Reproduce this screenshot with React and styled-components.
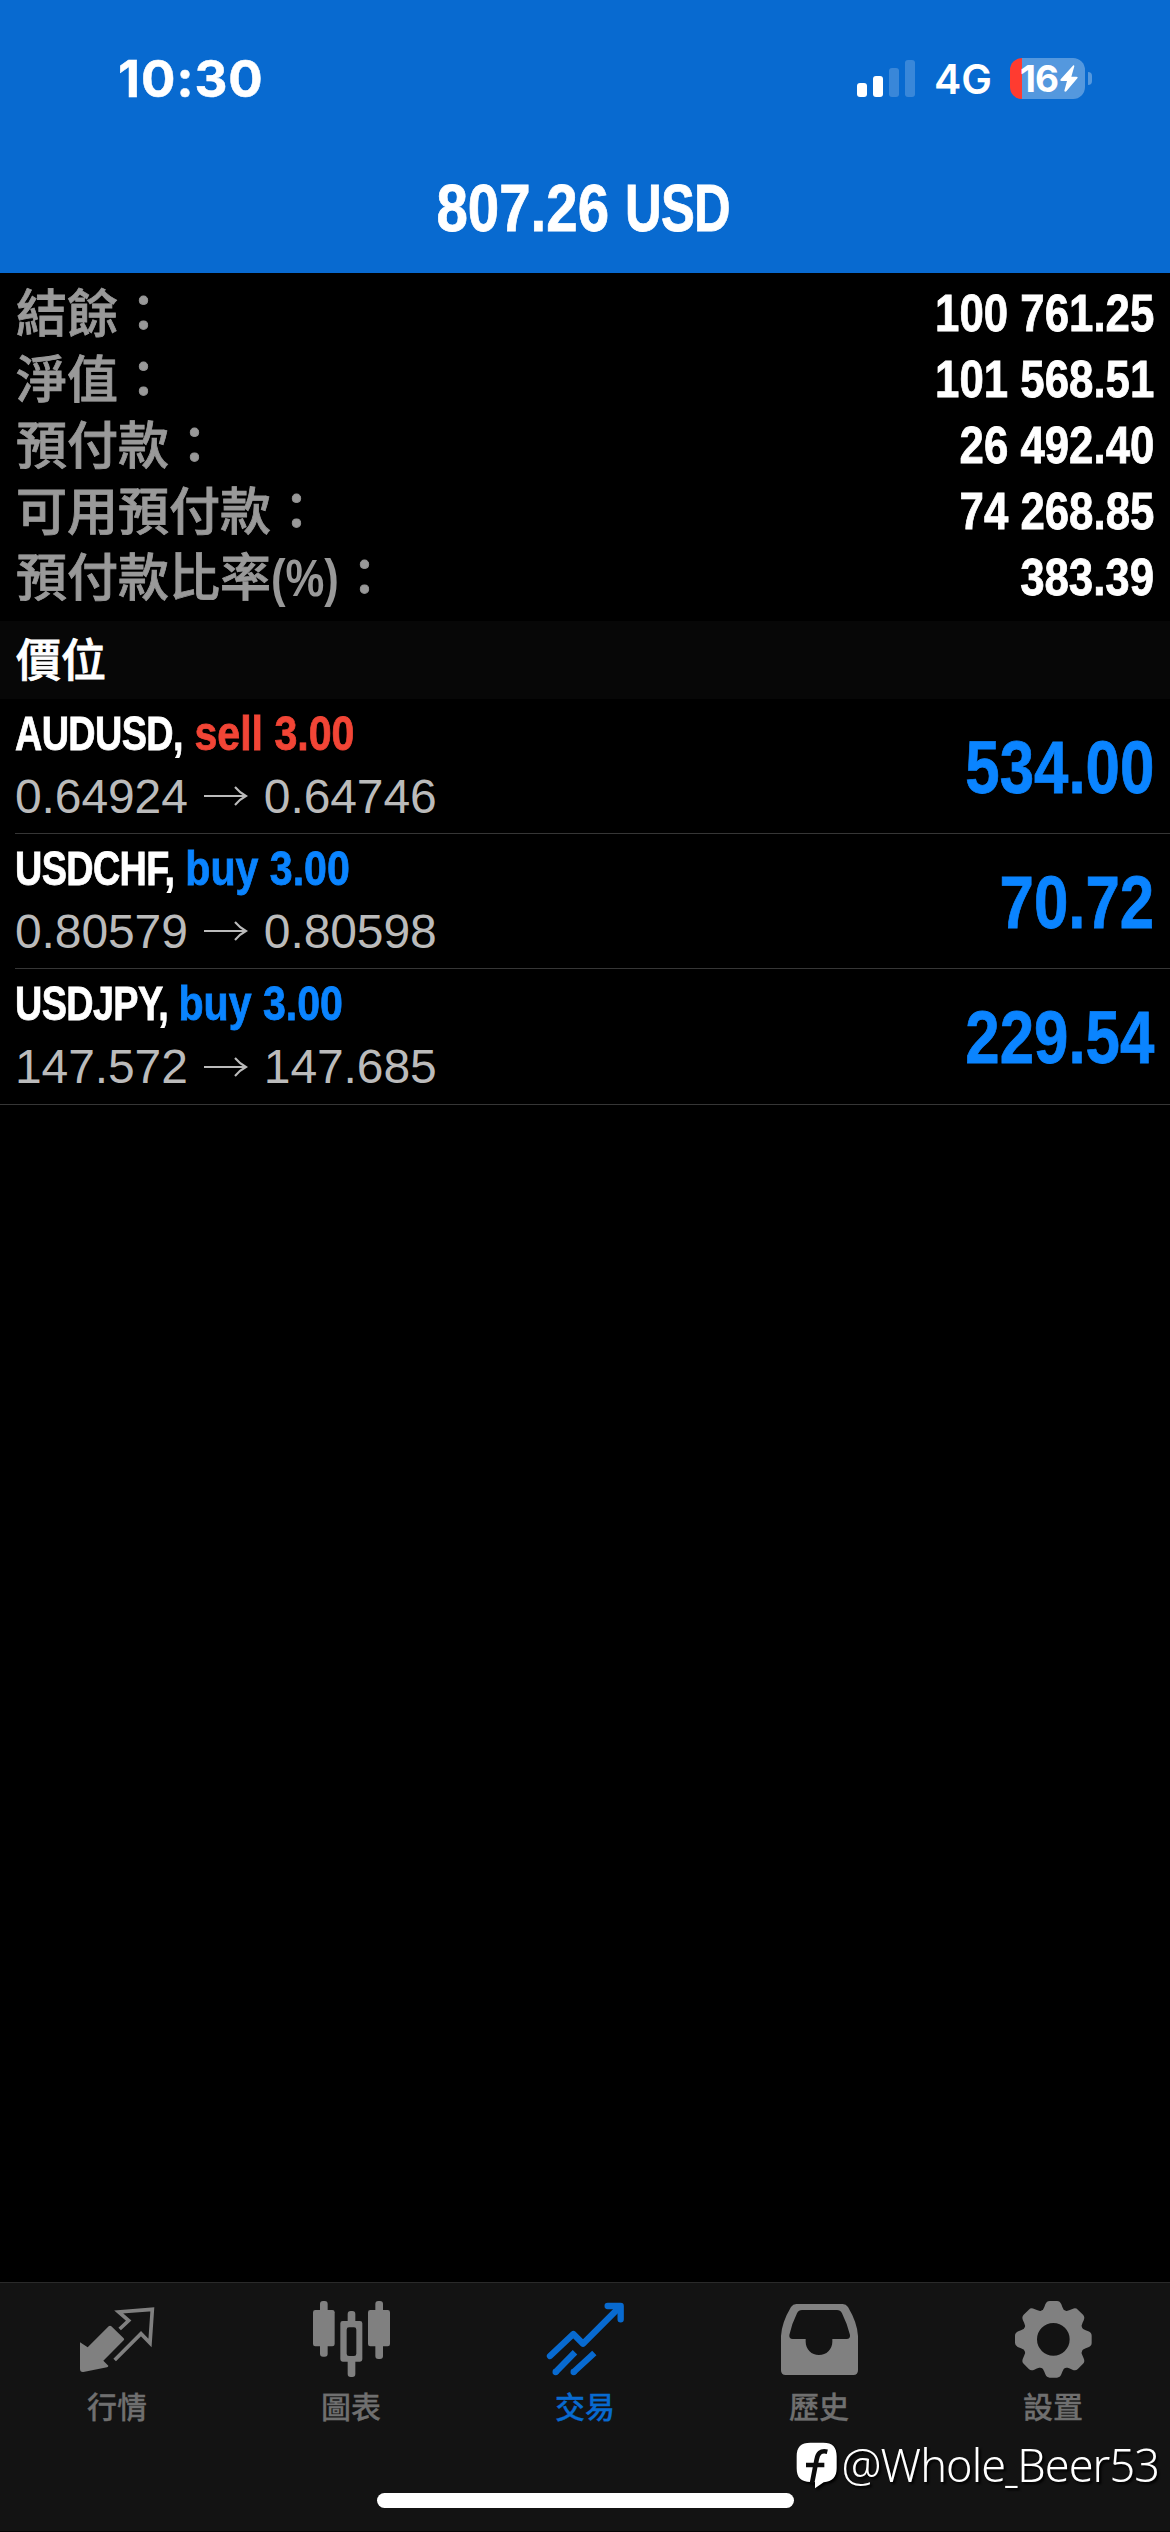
import React from 'react';
import styled, { createGlobalStyle } from 'styled-components';

const GlobalStyle = createGlobalStyle`
  * {
    box-sizing: border-box;
  }

  body {
    margin: 0;
    background: #000;
  }
`;

const account = [
  { label: '結餘：', value: '100 761.25' },
  { label: '淨值：', value: '101 568.51' },
  { label: '預付款：', value: '26 492.40' },
  { label: '可用預付款：', value: '74 268.85' },
  { label: '預付款比率', unit: '(%)', value: '383.39' },
];

const positions = [
  { symbol: 'AUDUSD', side: 'sell', volume: '3.00', open: '0.64924', current: '0.64746', profit: '534.00' },
  { symbol: 'USDCHF', side: 'buy', volume: '3.00', open: '0.80579', current: '0.80598', profit: '70.72' },
  { symbol: 'USDJPY', side: 'buy', volume: '3.00', open: '147.572', current: '147.685', profit: '229.54' },
];

const QuotesIcon = () => (
  <TabIcon viewBox="0 0 240 240">
    <path
      d="M9 127L32 142L95 79Q99 75 103 79L140 115Q143 118 140 121L79 182L94 197Q94 201 90 202L19 216Q9 217 9 207Z"
      fill="currentColor"
    />
    <path
      d="M128 87L155 62L125 36L226 28L219 129L192 101L113 180"
      fill="none"
      stroke="currentColor"
      strokeWidth="11"
    />
  </TabIcon>
);

const ChartIcon = () => (
  <TabIcon viewBox="0 0 240 240" fill="currentColor">
    <rect x="27" y="3" width="23" height="167" rx="9" />
    <rect x="6" y="30" width="65" height="109" rx="7" />
    <rect x="193" y="3" width="23" height="174" rx="9" />
    <rect x="171" y="30" width="66" height="109" rx="7" />
    <rect x="110" y="33" width="23" height="45" rx="9" />
    <rect x="110" y="175" width="23" height="56" rx="9" />
    <path
      fillRule="evenodd"
      d="M95 63H147Q154 63 154 70V178Q154 185 147 185H95Q88 185 88 178V70Q88 63 95 63ZM114 82Q107 82 107 89V161Q107 168 114 168H129Q136 168 136 161V89Q136 82 129 82Z"
    />
  </TabIcon>
);

const TradeIcon = () => (
  <TabIcon viewBox="0 0 240 240" fill="none" stroke="currentColor" strokeWidth="19" strokeLinejoin="round">
    <path strokeLinecap="round" d="M15 168L85 102L114 131L224 21" />
    <path strokeLinecap="round" d="M188 18H227V58" />
    <path d="M32 216L90 157M86 216L148 159" />
    <circle cx="32" cy="216" r="9.5" fill="currentColor" stroke="none" />
    <circle cx="86" cy="216" r="9.5" fill="currentColor" stroke="none" />
  </TabIcon>
);

const HistoryIcon = () => (
  <TabIcon viewBox="0 0 240 240" fill="currentColor">
    <path
      fillRule="evenodd"
      d="M52 12H191Q201 12 207 21Q235 68 237 108V211Q237 225 223 225H20Q6 225 6 211V108Q8 68 36 21Q42 12 52 12ZM69 30Q59 30 54 40Q38 72 31 105Q30 117 41 117H80V125C80 148 98 165 120 165C142 165 160 148 160 125V117H203Q214 117 213 105Q205 72 189 40Q184 30 174 30Z"
    />
  </TabIcon>
);

const SettingsIcon = () => (
  <TabIcon viewBox="0 0 240 240" fill="currentColor">
    <g transform="translate(121 118)">
      <circle r="71" fill="none" stroke="currentColor" strokeWidth="44" />
      {[0, 45, 90, 135, 180, 225, 270, 315].map((angle) => (
        <path
          key={angle}
          transform={`rotate(${angle})`}
          d="M-37 -83Q-31 -86 -27 -97L-24 -105Q-20 -115 -11 -115H11Q20 -115 24 -105L27 -97Q31 -86 37 -83L20 -70H-20Z"
        />
      ))}
    </g>
  </TabIcon>
);

const tabs = [
  { label: '行情', icon: QuotesIcon },
  { label: '圖表', icon: ChartIcon },
  { label: '交易', icon: TradeIcon, active: true },
  { label: '歷史', icon: HistoryIcon },
  { label: '設置', icon: SettingsIcon },
];

const StatusBar = () => (
  <StatusRow>
    <Clock>10:30</Clock>
    <Signal>
      <Bar $height={14} $on />
      <Bar $height={21} $on />
      <Bar $height={29} />
      <Bar $height={37} />
    </Signal>
    <Network>4G</Network>
    <Battery>
      <span>16</span>
      <svg width="18" height="27" viewBox="0 0 54 81">
        <path
          d="M40 1L2 43Q-1 48 5 48H21L13 77Q14 82 19 79L52 40Q55 35 49 35H34L43 4Q43 0 40 1Z"
          fill="#fff"
        />
      </svg>
    </Battery>
    <BatteryCap />
  </StatusRow>
);

const App = () => {
  return (
    <Screen>
      <GlobalStyle />
      <Header>
        <StatusBar />
        <Title>
          <Condensed $origin="center" $scale={0.842}>
            807.26 <Currency>USD</Currency>
          </Condensed>
        </Title>
      </Header>

      <Account>
        {account.map(({ label, unit, value }) => (
          <AccountRow key={label}>
            <AccountLabel>
              {label}
              {unit && (
                <>
                  <Unit>{unit}</Unit>：
                </>
              )}
            </AccountLabel>
            <Condensed $origin="right" $scale={0.842}>
              {value}
            </Condensed>
          </AccountRow>
        ))}
      </Account>

      <SectionTitle>價位</SectionTitle>

      <Positions>
        {positions.map((p) => (
          <Position key={p.symbol}>
            <Details>
              <Deal>
                <Ticker>{p.symbol}, </Ticker>
                <Side $side={p.side}>
                  {p.side} {p.volume}
                </Side>
              </Deal>
              <Prices>
                {p.open}
                <Arrow viewBox="0 0 44 22">
                  <path d="M0 11H41M31 2Q36 8 42 11Q36 14 31 20" fill="none" stroke="currentColor" strokeWidth="2" />
                </Arrow>
                {p.current}
              </Prices>
            </Details>
            <Profit $origin="right" $scale={0.835}>
              {p.profit}
            </Profit>
          </Position>
        ))}
      </Positions>

      <TabBar>
        {tabs.map(({ label, icon: Icon, active }) => (
          <Tab key={label} $active={active}>
            <Icon />
            <TabLabel $active={active}>{label}</TabLabel>
          </Tab>
        ))}
      </TabBar>
      <HomeIndicator />

      <Watermark>
        <Logo viewBox="0 0 126 144">
          <path
            d="M46 5H85C112 5 125 18 125 46V82C125 108 112 122 86 124L60 142V123H46C18 123 5 110 5 82V46C5 18 18 5 46 5Z"
            fill="#fff"
          />
          <path d="M97 32C76 27 68 38 65 55L51 127M33 72H88" fill="none" stroke="#0c0c0c" strokeWidth="14" />
        </Logo>
        <Handle>
          @Whole<Underscore>_</Underscore>Beer53
        </Handle>
      </Watermark>
    </Screen>
  );
};

const Screen = styled.div`
  position: relative;
  display: flex;
  flex-direction: column;
  width: 1170px;
  height: 2532px;
  background: #000;
  color: #fff;
  font-family: 'Liberation Sans', 'Noto Sans CJK TC', sans-serif;
  overflow: hidden;
`;

const Header = styled.header`
  height: 273px;
  background: #086ad0;
`;

const StatusRow = styled.div`
  display: flex;
  align-items: center;
  height: 156px;
  padding: 0 78px 0 118px;
  font-family: Inter, sans-serif;
`;

const Clock = styled.div`
  margin-right: auto;
  font-size: 51px;
  font-weight: 700;
  letter-spacing: 1px;
  -webkit-text-stroke: 0.5px;
`;

const Signal = styled.div`
  display: flex;
  align-items: flex-end;
  gap: 6px;
  height: 37px;
`;

const Bar = styled.i`
  width: 10px;
  height: ${({ $height }) => $height}px;
  border-radius: 3px;
  background: ${({ $on }) => ($on ? '#fff' : 'rgba(255, 255, 255, 0.2)')};
`;

const Network = styled.div`
  width: 57px;
  margin: 2px 19px 0;
  font-size: 41px;
  font-weight: 600;
`;

const Battery = styled.div`
  display: flex;
  align-items: center;
  justify-content: flex-end;
  gap: 2px;
  width: 75px;
  height: 41px;
  padding-right: 7px;
  border-radius: 12px;
  background: linear-gradient(90deg, #ff3b30 12px, #5498de 12px);
  font-size: 37px;
  font-weight: 700;
  letter-spacing: -1px;
`;

const BatteryCap = styled.i`
  width: 4px;
  height: 13px;
  margin-left: 3px;
  border-radius: 0 6px 6px 0;
  background: #5498de;
`;

const Title = styled.h1`
  display: flex;
  justify-content: center;
  margin: 0;
  padding-right: 4px;
  font-size: 67px;
  line-height: 104px;
`;

const Condensed = styled.span`
  display: inline-block;
  font-weight: 700;
  white-space: pre;
  transform: scaleX(${({ $scale }) => $scale || 0.856});
  transform-origin: ${({ $origin }) => $origin || 'left'};
  -webkit-text-stroke: 0.8px;
`;

const Currency = styled.span`
  display: inline-block;
  margin-right: -14px;
  letter-spacing: -1px;
  transform: scaleX(0.9);
  transform-origin: left;
`;

const Account = styled.section`
  height: 348px;
  padding: 8px 16px 0;
`;

const AccountRow = styled.div`
  display: flex;
  justify-content: space-between;
  height: 66px;
  font-size: 52px;
  line-height: 65px;
`;

const AccountLabel = styled.div`
  color: #999;
  font-size: 51px;
  font-weight: 500;
  line-height: 67px;
  -webkit-text-stroke: 0.8px;
`;

const Unit = styled(Condensed)`
  width: 68px;
  -webkit-text-stroke: 0;
`;

const SectionTitle = styled.h2`
  height: 78px;
  margin: 0;
  padding: 2px 0 0 16px;
  background: #070707;
  font-size: 45px;
  font-weight: 500;
  line-height: 78px;
  -webkit-text-stroke: 0.8px;
`;

const Positions = styled.section`
  flex: 1;
`;

const Position = styled.article`
  display: flex;
  align-items: center;
  justify-content: space-between;
  height: 135px;
  margin-left: 15px;
  padding-right: 16px;
  border-bottom: 1px solid #363636;

  &:last-child {
    height: 136px;
    margin-left: 0;
    padding-left: 15px;
  }
`;

const Details = styled.div`
  padding-bottom: 2px;
`;

const Deal = styled(Condensed)`
  display: block;
  font-size: 48px;
  line-height: 62px;
`;

const Ticker = styled.span`
  display: inline-block;
  margin-right: -16px;
  letter-spacing: -0.8px;
  transform: scaleX(0.92);
  transform-origin: left;
`;

const Side = styled.span`
  color: ${({ $side }) => ($side === 'sell' ? '#f24536' : '#0a84ff')};
`;

const Prices = styled.div`
  display: flex;
  align-items: center;
  color: #bbb;
  font-size: 48px;
  letter-spacing: -0.1px;
  line-height: 63px;
`;

const Arrow = styled.svg`
  width: 44px;
  height: 22px;
  margin: 0 16px;
`;

const Profit = styled(Condensed)`
  padding-top: 2px;
  color: #0a84ff;
  font-size: 74px;
`;

const TabBar = styled.nav`
  display: grid;
  grid-template-columns: repeat(5, 1fr);
  height: 211px;
  padding-top: 17px;
  border-top: 1px solid #2a2a2a;
  background: #131313;
`;

const Tab = styled.div`
  display: flex;
  flex-direction: column;
  align-items: center;
  color: ${({ $active }) => ($active ? '#086ad0' : '#808080')};
`;

const TabIcon = styled.svg`
  width: 80px;
  height: 80px;
`;

const TabLabel = styled.span`
  margin-top: 8px;
  color: ${({ $active }) => ($active ? '#086ad0' : '#6f6f6f')};
  font-size: 30px;
  font-weight: 500;
  line-height: 40px;
  -webkit-text-stroke: 0.3px;
`;

const HomeIndicator = styled.div`
  height: 39px;
  border-bottom: 1px solid #050505;
  background: #131313;

  &::before {
    content: '';
    display: block;
    width: 417px;
    height: 15px;
    margin: 0 auto;
    border-radius: 8px;
    background: #fff;
  }
`;

const Watermark = styled.div`
  position: absolute;
  right: 11px;
  bottom: 37px;
  display: flex;
  align-items: center;
  filter: drop-shadow(2px 2px 1px #000);
`;

const Logo = styled.svg`
  width: 42px;
  height: 48px;
  margin-right: 4px;
`;

const Handle = styled.span`
  font-family: 'Noto Sans', sans-serif;
  font-size: 45px;
  font-weight: 300;
  letter-spacing: -0.9px;
  line-height: 60px;
`;

const Underscore = styled.span`
  display: inline-block;
  margin: 0 -3px;
  transform: scaleX(0.65);
`;

export default App;
